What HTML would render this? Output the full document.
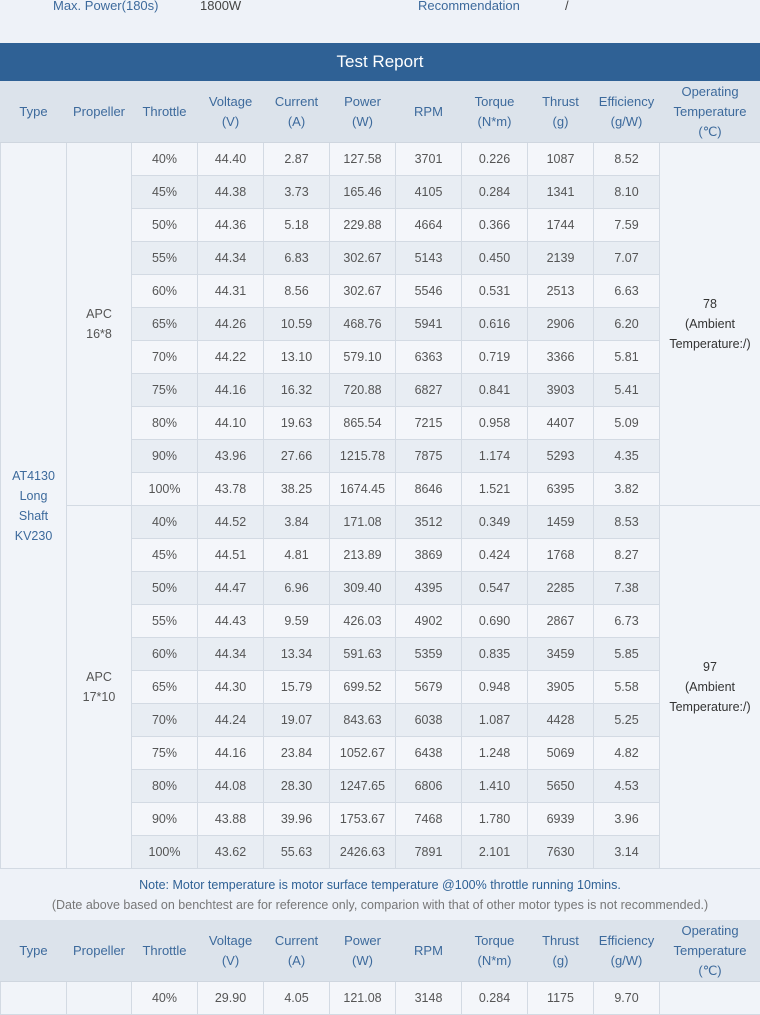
<html><head><style>
body{margin:0;width:760px;height:1002px;overflow:hidden;background:#eef2f8;font-family:"Liberation Sans",sans-serif;}
.top{position:absolute;top:0;left:0;width:760px;height:14px;font-size:13px;color:#3d6a9c;line-height:14px}
.top span{position:absolute;top:-1px}
.bar{position:absolute;top:43px;left:0;width:760px;height:38px;background:#2f6195;color:#fff;font-size:17px;text-align:center;line-height:38px}
table{position:absolute;left:0;border-collapse:collapse;table-layout:fixed;width:760px;font-size:12.5px}
td{border:1px solid #d3dae3;text-align:center;color:#555;height:33px;padding:0;line-height:20px}
tr.h td{background:#dce3eb;color:#3d6a9c;height:61px;font-size:13px;border-color:#dce3eb;border-bottom-color:#cfd6df}
tr:nth-child(even) td.d{background:#f4f6fa}
tr:nth-child(odd) td.d{background:#e8edf3}
td.s{background:#f1f4f9;color:#555}
td.t{color:#3d6a9c;background:#f1f4f9}
.note{position:absolute;top:868px;left:0;width:760px;height:52px;text-align:center;font-size:12.5px;line-height:20px;padding-top:7px;box-sizing:border-box}
</style></head><body>
<div class="top"><span style="left:53px">Max. Power(180s)</span><span style="left:200px;color:#444">1800W</span><span style="left:418px">Recommendation</span><span style="left:565px;color:#444">/</span></div>
<div class="bar">Test Report</div>
<table style="top:81px">
<colgroup><col width="66"><col width="65"><col width="66"><col width="66"><col width="66"><col width="66"><col width="66"><col width="66"><col width="66"><col width="66"><col width="101"></colgroup>
<tr class="h"><td>Type</td><td>Propeller</td><td>Throttle</td><td>Voltage<br>(V)</td><td>Current<br>(A)</td><td>Power<br>(W)</td><td>RPM</td><td>Torque<br>(N*m)</td><td>Thrust<br>(g)</td><td>Efficiency<br>(g/W)</td><td>Operating<br>Temperature<br>(℃)</td></tr>
<tr><td rowspan="22" class="t">AT4130<br>Long<br>Shaft<br>KV230</td><td rowspan="11" class="s">APC<br>16*8</td><td class="d">40%</td><td class="d">44.40</td><td class="d">2.87</td><td class="d">127.58</td><td class="d">3701</td><td class="d">0.226</td><td class="d">1087</td><td class="d">8.52</td><td rowspan="11" class="s" style="color:#333">78<br>(Ambient<br>Temperature:/)</td></tr>
<tr><td class="d">45%</td><td class="d">44.38</td><td class="d">3.73</td><td class="d">165.46</td><td class="d">4105</td><td class="d">0.284</td><td class="d">1341</td><td class="d">8.10</td></tr>
<tr><td class="d">50%</td><td class="d">44.36</td><td class="d">5.18</td><td class="d">229.88</td><td class="d">4664</td><td class="d">0.366</td><td class="d">1744</td><td class="d">7.59</td></tr>
<tr><td class="d">55%</td><td class="d">44.34</td><td class="d">6.83</td><td class="d">302.67</td><td class="d">5143</td><td class="d">0.450</td><td class="d">2139</td><td class="d">7.07</td></tr>
<tr><td class="d">60%</td><td class="d">44.31</td><td class="d">8.56</td><td class="d">302.67</td><td class="d">5546</td><td class="d">0.531</td><td class="d">2513</td><td class="d">6.63</td></tr>
<tr><td class="d">65%</td><td class="d">44.26</td><td class="d">10.59</td><td class="d">468.76</td><td class="d">5941</td><td class="d">0.616</td><td class="d">2906</td><td class="d">6.20</td></tr>
<tr><td class="d">70%</td><td class="d">44.22</td><td class="d">13.10</td><td class="d">579.10</td><td class="d">6363</td><td class="d">0.719</td><td class="d">3366</td><td class="d">5.81</td></tr>
<tr><td class="d">75%</td><td class="d">44.16</td><td class="d">16.32</td><td class="d">720.88</td><td class="d">6827</td><td class="d">0.841</td><td class="d">3903</td><td class="d">5.41</td></tr>
<tr><td class="d">80%</td><td class="d">44.10</td><td class="d">19.63</td><td class="d">865.54</td><td class="d">7215</td><td class="d">0.958</td><td class="d">4407</td><td class="d">5.09</td></tr>
<tr><td class="d">90%</td><td class="d">43.96</td><td class="d">27.66</td><td class="d">1215.78</td><td class="d">7875</td><td class="d">1.174</td><td class="d">5293</td><td class="d">4.35</td></tr>
<tr><td class="d">100%</td><td class="d">43.78</td><td class="d">38.25</td><td class="d">1674.45</td><td class="d">8646</td><td class="d">1.521</td><td class="d">6395</td><td class="d">3.82</td></tr>
<tr><td rowspan="11" class="s">APC<br>17*10</td><td class="d">40%</td><td class="d">44.52</td><td class="d">3.84</td><td class="d">171.08</td><td class="d">3512</td><td class="d">0.349</td><td class="d">1459</td><td class="d">8.53</td><td rowspan="11" class="s" style="color:#333">97<br>(Ambient<br>Temperature:/)</td></tr>
<tr><td class="d">45%</td><td class="d">44.51</td><td class="d">4.81</td><td class="d">213.89</td><td class="d">3869</td><td class="d">0.424</td><td class="d">1768</td><td class="d">8.27</td></tr>
<tr><td class="d">50%</td><td class="d">44.47</td><td class="d">6.96</td><td class="d">309.40</td><td class="d">4395</td><td class="d">0.547</td><td class="d">2285</td><td class="d">7.38</td></tr>
<tr><td class="d">55%</td><td class="d">44.43</td><td class="d">9.59</td><td class="d">426.03</td><td class="d">4902</td><td class="d">0.690</td><td class="d">2867</td><td class="d">6.73</td></tr>
<tr><td class="d">60%</td><td class="d">44.34</td><td class="d">13.34</td><td class="d">591.63</td><td class="d">5359</td><td class="d">0.835</td><td class="d">3459</td><td class="d">5.85</td></tr>
<tr><td class="d">65%</td><td class="d">44.30</td><td class="d">15.79</td><td class="d">699.52</td><td class="d">5679</td><td class="d">0.948</td><td class="d">3905</td><td class="d">5.58</td></tr>
<tr><td class="d">70%</td><td class="d">44.24</td><td class="d">19.07</td><td class="d">843.63</td><td class="d">6038</td><td class="d">1.087</td><td class="d">4428</td><td class="d">5.25</td></tr>
<tr><td class="d">75%</td><td class="d">44.16</td><td class="d">23.84</td><td class="d">1052.67</td><td class="d">6438</td><td class="d">1.248</td><td class="d">5069</td><td class="d">4.82</td></tr>
<tr><td class="d">80%</td><td class="d">44.08</td><td class="d">28.30</td><td class="d">1247.65</td><td class="d">6806</td><td class="d">1.410</td><td class="d">5650</td><td class="d">4.53</td></tr>
<tr><td class="d">90%</td><td class="d">43.88</td><td class="d">39.96</td><td class="d">1753.67</td><td class="d">7468</td><td class="d">1.780</td><td class="d">6939</td><td class="d">3.96</td></tr>
<tr><td class="d">100%</td><td class="d">43.62</td><td class="d">55.63</td><td class="d">2426.63</td><td class="d">7891</td><td class="d">2.101</td><td class="d">7630</td><td class="d">3.14</td></tr>
</table>
<div class="note"><div style="color:#2f6195">Note: Motor temperature is motor surface temperature @100% throttle running 10mins.</div><div style="color:#777">(Date above based on benchtest are for reference only, comparion with that of other motor types is not recommended.)</div></div>
<table style="top:920px">
<colgroup><col width="66"><col width="65"><col width="66"><col width="66"><col width="66"><col width="66"><col width="66"><col width="66"><col width="66"><col width="66"><col width="101"></colgroup>
<tr class="h"><td>Type</td><td>Propeller</td><td>Throttle</td><td>Voltage<br>(V)</td><td>Current<br>(A)</td><td>Power<br>(W)</td><td>RPM</td><td>Torque<br>(N*m)</td><td>Thrust<br>(g)</td><td>Efficiency<br>(g/W)</td><td>Operating<br>Temperature<br>(℃)</td></tr>
<tr><td class="s"></td><td class="s"></td><td class="d">40%</td><td class="d">29.90</td><td class="d">4.05</td><td class="d">121.08</td><td class="d">3148</td><td class="d">0.284</td><td class="d">1175</td><td class="d">9.70</td><td class="s"></td></tr>
</table>
</body></html>
